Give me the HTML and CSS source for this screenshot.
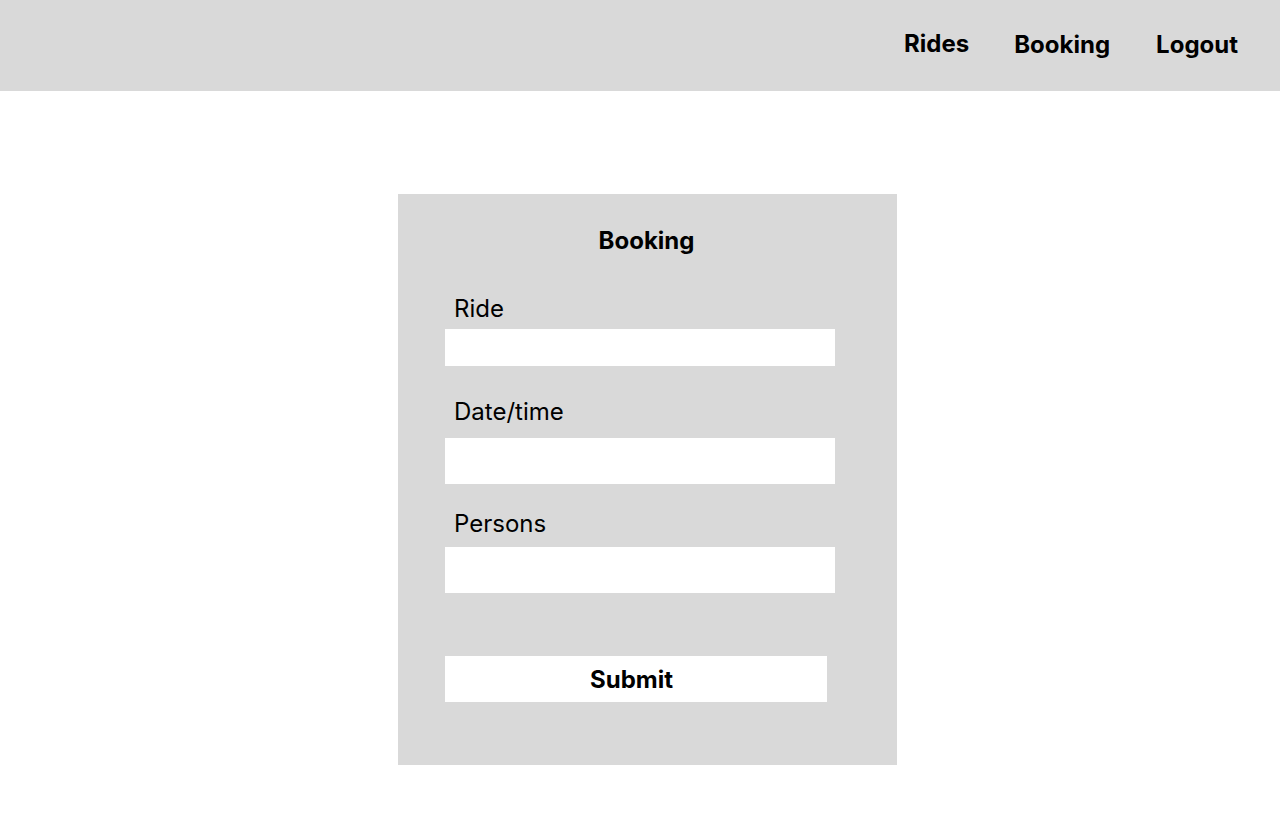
FILE: index.html
```html
<!DOCTYPE html>
<html lang="en">
<head>
<meta charset="utf-8">
<title>Booking</title>
<link rel="stylesheet" href="styles.css">
</head>
<body>
<header class="topbar">
  <nav class="nav">
    <a class="nav-link nav-link--rides" href="#">Rides</a>
    <a class="nav-link" href="#">Booking</a>
    <a class="nav-link" href="#">Logout</a>
  </nav>
</header>
<main class="main">
  <form class="card">
    <h1 class="card-title">Booking</h1>
    <div class="field field--ride">
      <label class="field-label" for="ride">Ride</label>
      <input class="field-input field-input--short" id="ride" type="text">
    </div>
    <div class="field field--date">
      <label class="field-label field-label--date" for="date">Date/time</label>
      <input class="field-input" id="date" type="text">
    </div>
    <div class="field field--persons">
      <label class="field-label field-label--persons" for="persons">Persons</label>
      <input class="field-input" id="persons" type="text">
    </div>
    <button class="submit" type="button">Submit</button>
  </form>
</main>
</body>
</html>
```

FILE: styles.css
```css
* {
  box-sizing: border-box;
}

html, body {
  margin: 0;
  padding: 0;
  background: #ffffff;
}

body {
  font-family: Inter, "Liberation Sans", sans-serif;
  color: #000000;
}

.topbar {
  height: 91px;
  background: #d9d9d9;
  display: flex;
  justify-content: flex-end;
  align-items: flex-start;
  padding: 30px 42px 0 0;
}

.nav {
  display: flex;
  align-items: flex-start;
  gap: 46px;
}

.nav-link {
  font-size: 24px;
  line-height: 29px;
  font-weight: 700;
  color: #000000;
  text-decoration: none;
}

.nav-link--rides {
  margin-top: -1px;
  margin-right: -1px;
}

.main {
  display: flex;
  justify-content: center;
  padding: 103px 0 0 15px;
}

.card {
  width: 499px;
  background: #d9d9d9;
  padding: 32px 62px 63px 47px;
  display: flex;
  flex-direction: column;
  align-items: flex-start;
  margin: 0;
}

.card-title {
  align-self: stretch;
  margin: 0 -13px 0 0;
  text-align: center;
  font-size: 24px;
  line-height: 29px;
  font-weight: 700;
}

.field {
  display: flex;
  flex-direction: column;
  width: 390px;
}

.field--ride {
  margin-top: 39px;
}

.field--date {
  margin-top: 31px;
}

.field--persons {
  margin-top: 25px;
}

.field-label {
  display: block;
  padding-left: 9px;
  font-size: 24px;
  line-height: 29px;
  font-weight: 400;
  color: #000000;
  margin-bottom: 6px;
}

.field-label--date {
  margin-bottom: 12px;
}

.field-label--persons {
  margin-bottom: 9px;
}

.field-input {
  display: block;
  width: 390px;
  height: 46px;
  border: none;
  background: #ffffff;
  margin: 0;
  padding: 0 10px;
  font: inherit;
  outline: none;
}

.field-input--short {
  height: 37px;
}

.submit {
  margin-top: 63px;
  width: 382px;
  height: 46px;
  border: none;
  background: #ffffff;
  padding: 0 9px 0 0;
  font-family: Inter, "Liberation Sans", sans-serif;
  font-size: 24px;
  line-height: 29px;
  font-weight: 700;
  color: #000000;
  text-align: center;
  cursor: pointer;
}
```
